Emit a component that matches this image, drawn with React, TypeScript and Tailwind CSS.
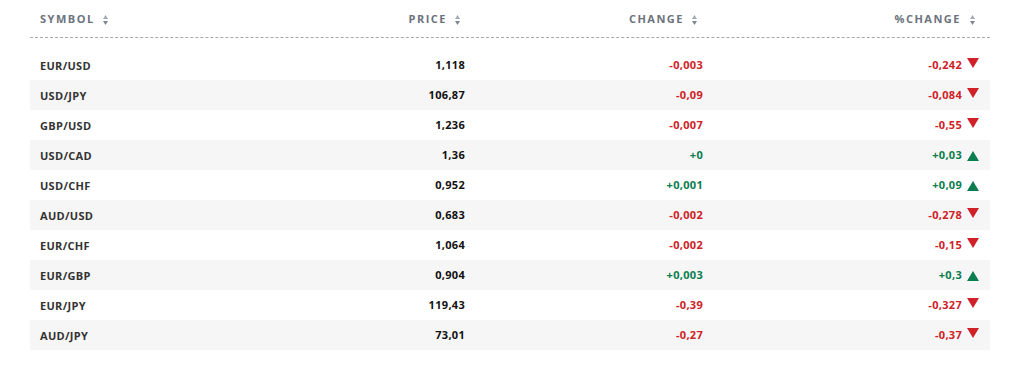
import React from "react";

type Row = { s: string; p: string; c: string; pc: string; up: boolean };

const rows: Row[] = [
  { s: "EUR/USD", p: "1,118", c: "-0,003", pc: "-0,242", up: false },
  { s: "USD/JPY", p: "106,87", c: "-0,09", pc: "-0,084", up: false },
  { s: "GBP/USD", p: "1,236", c: "-0,007", pc: "-0,55", up: false },
  { s: "USD/CAD", p: "1,36", c: "+0", pc: "+0,03", up: true },
  { s: "USD/CHF", p: "0,952", c: "+0,001", pc: "+0,09", up: true },
  { s: "AUD/USD", p: "0,683", c: "-0,002", pc: "-0,278", up: false },
  { s: "EUR/CHF", p: "1,064", c: "-0,002", pc: "-0,15", up: false },
  { s: "EUR/GBP", p: "0,904", c: "+0,003", pc: "+0,3", up: true },
  { s: "EUR/JPY", p: "119,43", c: "-0,39", pc: "-0,327", up: false },
  { s: "AUD/JPY", p: "73,01", c: "-0,27", pc: "-0,37", up: false },
];

const Sort = () => (
  <svg width="5" height="10" viewBox="0 0 5 10" className="shrink-0">
    <path d="M2.5 0 L5 4 L0 4 Z" fill="#a3aab3" />
    <path d="M2.5 10 L5 6 L0 6 Z" fill="#7d8690" />
  </svg>
);

const Tri = ({ up }: { up: boolean }) => (
  <svg width="12" height="10" viewBox="0 0 12 10" className="shrink-0">
    {up ? (
      <path d="M6 0 L12 10 L0 10 Z" fill="#0b7d4f" />
    ) : (
      <path d="M0 0 L12 0 L6 10 Z" fill="#cf2127" />
    )}
  </svg>
);

export default function App() {
  const font = { fontFamily: "'Open Sans', Arial, sans-serif" };
  return (
    <div className="w-[1016px] h-[377px] bg-white" style={font}>
      <div className="ml-[30px] w-[960px]">
        <div className="flex h-[38px] pt-[2px] items-center border-b border-dashed border-[#a8a8a8] text-[11px] font-bold tracking-[1.5px] text-[#6c737c]">
          <div className="w-[225px] pl-[10px] flex items-center gap-[8px]">
            SYMBOL <Sort />
          </div>
          <div className="w-[220px] pr-[15px] flex items-center justify-end gap-[8px]">
            PRICE <Sort />
          </div>
          <div className="w-[238px] pr-[16px] flex items-center justify-end gap-[8px]">
            CHANGE <Sort />
          </div>
          <div className="w-[277px] pr-[15px] flex items-center justify-end gap-[9px]">
            %CHANGE <Sort />
          </div>
        </div>
        <div className="mt-[12px]">
          {rows.map((r, i) => (
            <div
              key={r.s}
              className={`flex h-[30px] items-center text-[11px] tracking-[0.3px] font-bold ${i % 2 === 1 ? "bg-[#f6f6f6]" : "bg-white"}`}
            >
              <div className="w-[225px] pl-[10px] text-[#333333] pt-[2px]">{r.s}</div>
              <div className="w-[220px] pr-[10px] text-right text-[#111111] pt-[1px]">{r.p}</div>
              <div className={`w-[238px] pr-[10px] text-right pt-[1px] ${r.up ? "text-[#0b7d4f]" : "text-[#cf2127]"}`}>
                {r.c}
              </div>
              <div className={`w-[277px] pr-[11px] flex items-center justify-end gap-[5px] ${r.up ? "text-[#0b7d4f]" : "text-[#cf2127]"}`}>
                <span className="pt-[1px]">{r.pc}</span>
                <span className={r.up ? "mt-[1px]" : "-mt-[4px]"}>
                  <Tri up={r.up} />
                </span>
              </div>
            </div>
          ))}
        </div>
      </div>
    </div>
  );
}
